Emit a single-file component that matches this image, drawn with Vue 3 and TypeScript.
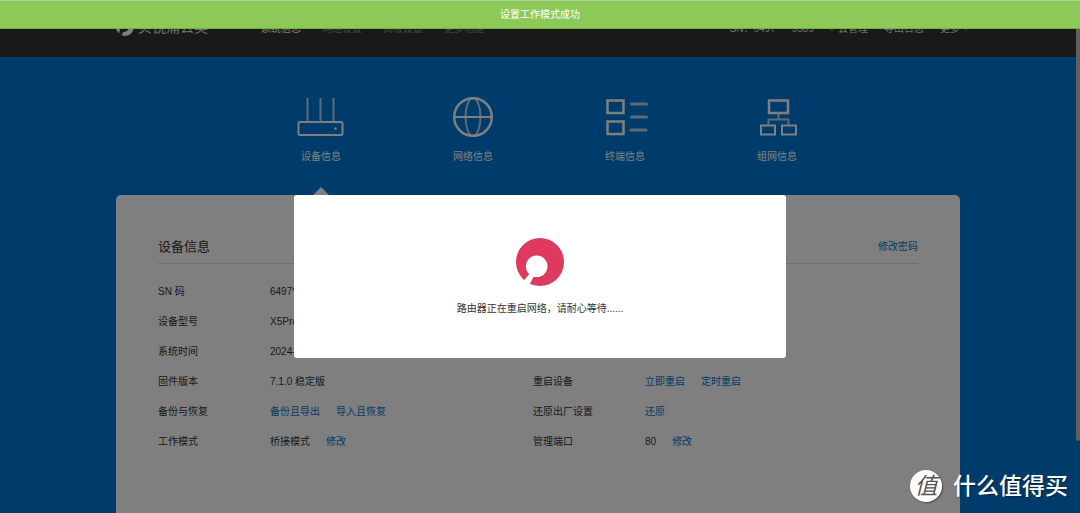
<script setup lang="ts">
interface Entry {
  label: string
  value?: string
  links?: string[]
}

const menu: string[] = ['系统信息', '网络设置', '高级设置', '更多功能']

const tabs: { id: string; label: string }[] = [
  { id: 'device', label: '设备信息' },
  { id: 'network', label: '网络信息' },
  { id: 'terminal', label: '终端信息' },
  { id: 'mesh', label: '组网信息' },
]

const columns: Entry[][] = [
  [
    { label: 'SN 码', value: '6497****' },
    { label: '设备型号', value: 'X5Pro' },
    { label: '系统时间', value: '2024-' },
    { label: '固件版本', value: '7.1.0 稳定版' },
    { label: '备份与恢复', links: ['备份且导出', '导入且恢复'] },
    { label: '工作模式', value: '桥接模式', links: ['修改'] },
  ],
  [
    { label: '重启设备', links: ['立即重启', '定时重启'] },
    { label: '还原出厂设置', links: ['还原'] },
    { label: '管理端口', value: '80', links: ['修改'] },
  ],
]
</script>

<template>
  <div class="page">
    <header class="topbar">
      <div class="wrap bar">
        <a href="#" class="brand">
          <svg class="brand-icon" viewBox="0 0 48 48" aria-hidden="true">
            <circle cx="24" cy="24" r="24" fill="#fff" />
            <circle cx="21" cy="24" r="13" fill="#333" />
            <path d="M11 30L7 43L14 49L20 35z" fill="#333" />
          </svg>
          <span>贝锐蒲公英</span>
        </a>
        <nav class="menu">
          <a v-for="(item, i) in menu" :key="item" href="#" :class="{ current: i === 0 }">{{ item }}</a>
        </nav>
        <div class="tools">
          <span class="serial"><span>SN：6497</span><span>9589</span></span>
          <a href="#" class="cloud">云管理</a>
          <a href="#">导出日志</a>
          <a href="#" class="more">更多</a>
        </div>
      </div>
    </header>

    <nav class="wrap tabs">
      <a v-for="(tab, i) in tabs" :key="tab.id" href="#" class="tab" :class="{ active: i === 0 }">
        <svg v-if="tab.id === 'device'" class="icon" viewBox="0 0 48 48" aria-hidden="true">
          <path class="thin" d="M10.500 5v23M23.500 5v23M36.500 5v23" />
          <rect x="1.500" y="29" width="44" height="13" rx="1.500" />
          <circle class="dot" cx="38.500" cy="35.500" r="1.300" />
        </svg>
        <svg v-else-if="tab.id === 'network'" class="icon" viewBox="0 0 48 48" aria-hidden="true">
          <ellipse class="thin" cx="24" cy="24" rx="7.500" ry="19" />
          <circle class="thick" cx="24" cy="24" r="18.800" />
          <path d="M5 24h38" />
        </svg>
        <svg v-else-if="tab.id === 'terminal'" class="icon" viewBox="0 0 48 48" aria-hidden="true">
          <rect class="thick" x="6.500" y="7.500" width="16" height="12.500" />
          <rect class="thick" x="6.500" y="28.500" width="16" height="12.500" />
          <path class="faint" d="M30.500 11h15M30.500 24h15M30 37h15" />
        </svg>
        <svg v-else class="icon" viewBox="0 0 48 48" aria-hidden="true">
          <path class="thin" d="M25.500 20v6.500M15.500 32v-5.500h20v5.500" />
          <rect class="thick" x="16" y="7.500" width="19" height="12.500" />
          <rect x="8" y="32.500" width="14" height="9" />
          <rect x="29" y="32.500" width="14" height="9" />
        </svg>
        <span>{{ tab.label }}</span>
      </a>
    </nav>

    <main class="wrap panel">
      <div class="panel-head">
        <h1>设备信息</h1>
        <a href="#">修改密码</a>
      </div>
      <div class="details">
        <dl v-for="(column, c) in columns" :key="c">
          <div v-for="entry in column" :key="entry.label" class="row">
            <dt>{{ entry.label }}</dt>
            <dd>
              <span v-if="entry.value">{{ entry.value }}</span>
              <a v-for="link in entry.links" :key="link" href="#">{{ link }}</a>
            </dd>
          </div>
        </dl>
      </div>
    </main>

    <div class="shade"></div>
    <div class="scroll-thumb"></div>

    <div class="dialog" role="dialog" aria-labelledby="restart-text">
      <svg class="spinner" viewBox="0 0 48 48" aria-hidden="true">
        <circle cx="24" cy="24" r="24" fill="#de3a5f" />
        <circle cx="20.700" cy="28.300" r="10.800" fill="#fff" />
        <path d="M13.300 36L7 43.500L12.500 48.500L18 38z" fill="#fff" />
      </svg>
      <p id="restart-text">路由器正在重启网络，请耐心等待......</p>
    </div>

    <div class="toast" role="status">设置工作模式成功</div>

    <div class="mark">
      <span class="mark-badge">值</span>
      <span>什么值得买</span>
    </div>
  </div>
</template>

<style>
body {
  margin: 0;
  background: #0078d6;
}
</style>

<style scoped>
.page {
  position: relative;
  display: flex;
  flex-direction: column;
  min-height: 100vh;
  overflow: hidden;
  background: #0078d6;
  color: #333;
  font-family: "Liberation Sans", "Noto Sans CJK SC", sans-serif;
  font-size: 10px;
  line-height: 16px;
}

a {
  color: #0a74c8;
  text-decoration: none;
}

.wrap {
  box-sizing: border-box;
  width: calc(100% - 236px);
  margin: 0 120px 0 116px;
}

.topbar {
  background: #333;
}

.bar {
  display: flex;
  align-items: center;
  height: 57px;
  white-space: nowrap;
}

.bar a {
  color: #ddd;
}

.brand {
  display: flex;
  align-items: center;
  gap: 4px;
  padding-bottom: 3px;
  font-size: 14px;
}

.brand-icon {
  width: 18px;
  height: 18px;
}

.menu {
  display: flex;
  gap: 21px;
  margin-left: 53px;
}

.menu a {
  color: #888;
}

.menu .current {
  color: #fff;
}

.tools {
  display: flex;
  gap: 16px;
  margin-left: auto;
  color: #ddd;
}

.serial {
  display: flex;
  gap: 16px;
}

.cloud {
  display: flex;
  align-items: center;
  gap: 4px;
}

.cloud::before {
  content: "";
  width: 4px;
  height: 4px;
  border-radius: 50%;
  background: #00b400;
}

.more {
  position: relative;
}

.more::after {
  content: "";
  position: absolute;
  top: 6px;
  right: -9px;
  border: 3px solid transparent;
  border-top-color: #ddd;
  border-bottom: 0;
}

.tabs {
  display: flex;
  height: 138px;
  padding-left: 129px;
}

.tab {
  position: relative;
  display: flex;
  flex-direction: column;
  align-items: center;
  gap: 8px;
  width: 152px;
  padding-top: 36px;
  color: #fff;
}

.active::after {
  content: "";
  position: absolute;
  bottom: 0;
  border: 8px solid transparent;
  border-top: 0;
  border-bottom-color: #fff;
}

.icon {
  width: 48px;
  height: 48px;
  fill: none;
  stroke: #fff;
  stroke-width: 2;
}

.icon .thin {
  stroke-width: 2;
  stroke: #bcd4ea;
}

.icon .thick {
  stroke-width: 2.500;
}

.icon .faint {
  stroke: #bcd4ea;
  stroke-width: 3;
  stroke-linecap: round;
}

.icon .dot {
  fill: #fff;
  stroke: none;
}

.panel {
  flex: 1;
  padding: 40px 42px;
  border-radius: 5px 5px 0 0;
  background: #fff;
}

.panel-head {
  display: flex;
  align-items: center;
  justify-content: space-between;
  height: 24px;
  padding-bottom: 4px;
  border-bottom: 1px solid #ddd;
}

.panel-head h1 {
  margin: 0;
  font-size: 13px;
  font-weight: 400;
  line-height: 20px;
}

.details {
  display: grid;
  grid-template-columns: 375px 1fr;
  margin-top: 13px;
}

dl {
  display: flex;
  flex-direction: column;
  justify-content: flex-end;
  margin: 0;
}

.row {
  display: flex;
  align-items: center;
  height: 30px;
}

dt {
  width: 112px;
}

dd {
  display: flex;
  gap: 16px;
  margin: 0;
}

.shade {
  position: absolute;
  inset: 0;
  background: rgba(0, 0, 0, 0.5);
}

.scroll-thumb {
  position: absolute;
  top: 0;
  right: 0;
  width: 4px;
  height: 441px;
  border-radius: 2px;
  background: #606060;
}

.dialog {
  position: absolute;
  top: 195px;
  left: 50%;
  display: flex;
  flex-direction: column;
  align-items: center;
  gap: 15px;
  box-sizing: border-box;
  width: 492px;
  margin-left: -246px;
  padding: 43px 20px 41px;
  border-radius: 3px;
  background: #fff;
}

.dialog p {
  margin: 0;
}

.spinner {
  width: 48px;
  height: 48px;
}

.toast {
  position: absolute;
  top: 0;
  left: 0;
  right: 0;
  box-sizing: border-box;
  height: 29px;
  border-top: 1px solid #b0d090;
  border-bottom: 1px solid #78ac45;
  background: #8dc959;
  color: #fff;
  line-height: 27px;
  text-align: center;
}

.mark {
  position: absolute;
  right: 12px;
  bottom: 11px;
  display: flex;
  align-items: center;
  gap: 11px;
  color: #fff;
  font-size: 23px;
  font-weight: 500;
  line-height: 32px;
  text-shadow: 1px 1px 2px rgba(0, 0, 0, 0.4);
}

.mark-badge {
  width: 32px;
  height: 32px;
  border-radius: 50%;
  background: #fff;
  box-shadow: 1px 1px 2px rgba(0, 0, 0, 0.4);
  color: #555;
  font-style: italic;
  font-weight: 400;
  text-align: center;
  text-shadow: none;
}
</style>
